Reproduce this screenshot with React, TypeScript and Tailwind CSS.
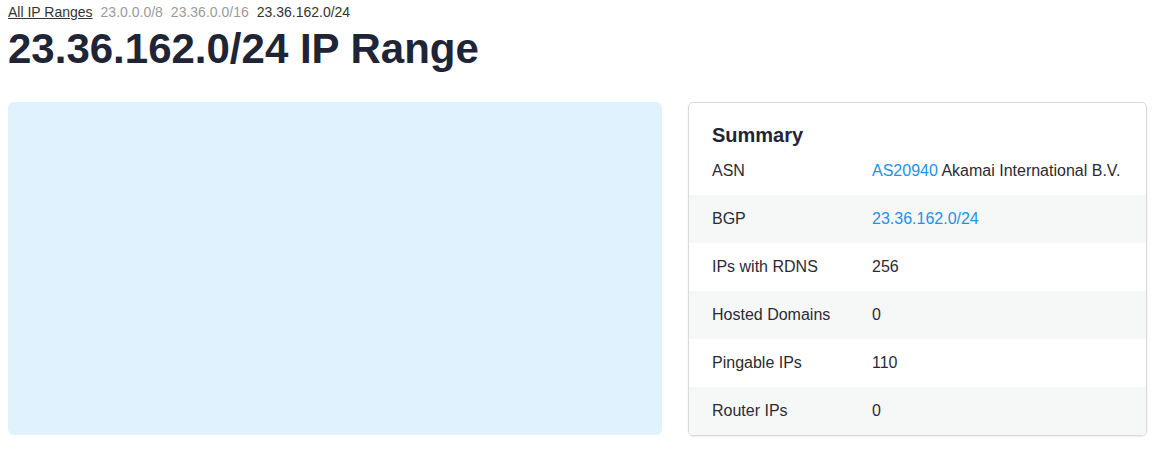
import React from "react";

type Row = { label: string; value: React.ReactNode };

const rows: Row[] = [
  {
    label: "ASN",
    value: (
      <>
        <a href="#" className="text-[#2391e6]">
          AS20940
        </a>{" "}
        Akamai International B.V.
      </>
    ),
  },
  {
    label: "BGP",
    value: (
      <a href="#" className="text-[#2391e6]">
        23.36.162.0/24
      </a>
    ),
  },
  { label: "IPs with RDNS", value: "256" },
  { label: "Hosted Domains", value: "0" },
  { label: "Pingable IPs", value: "110" },
  { label: "Router IPs", value: "0" },
];

export default function App() {
  return (
    <div
      className="min-h-screen w-full bg-white px-2 pt-[2px] text-[#2b2b33]"
      style={{ fontFamily: '"Liberation Sans", Arial, sans-serif' }}
    >
      {/* breadcrumb */}
      <nav className="flex items-center gap-2 text-[14px] leading-5">
        <a href="#" className="text-[#333] underline">
          All IP Ranges
        </a>
        <a href="#" className="text-[#9a9a9a]">
          23.0.0.0/8
        </a>
        <a href="#" className="text-[#9a9a9a]">
          23.36.0.0/16
        </a>
        <span className="text-[#333]">23.36.162.0/24</span>
      </nav>

      <h1 className="mt-[4px] text-[42px] font-bold leading-[46px] text-[#1f2536]">
        23.36.162.0/24 IP Range
      </h1>

      <div className="mt-[30px] flex gap-[26px]">
        <div className="h-[333px] w-[654px] rounded-md bg-sky-100" />

        <div className="w-[459px] overflow-hidden rounded-[5px] border border-[#d9d9d9] shadow-[0_1px_2px_rgba(0,0,0,0.08)]">
          <h2 className="px-[23px] pt-[20px] text-[20px] font-bold leading-6 text-[#1f2536]">
            Summary
          </h2>
          <div>
            {rows.map((row, i) => (
              <div
                key={row.label}
                className={`flex px-[23px] py-3 text-[16px] leading-6 ${
                  i % 2 === 1 ? "bg-[#f6f8f8]" : "bg-white"
                }`}
              >
                <div className="w-40 shrink-0">{row.label}</div>
                <div>{row.value}</div>
              </div>
            ))}
          </div>
        </div>
      </div>
    </div>
  );
}
